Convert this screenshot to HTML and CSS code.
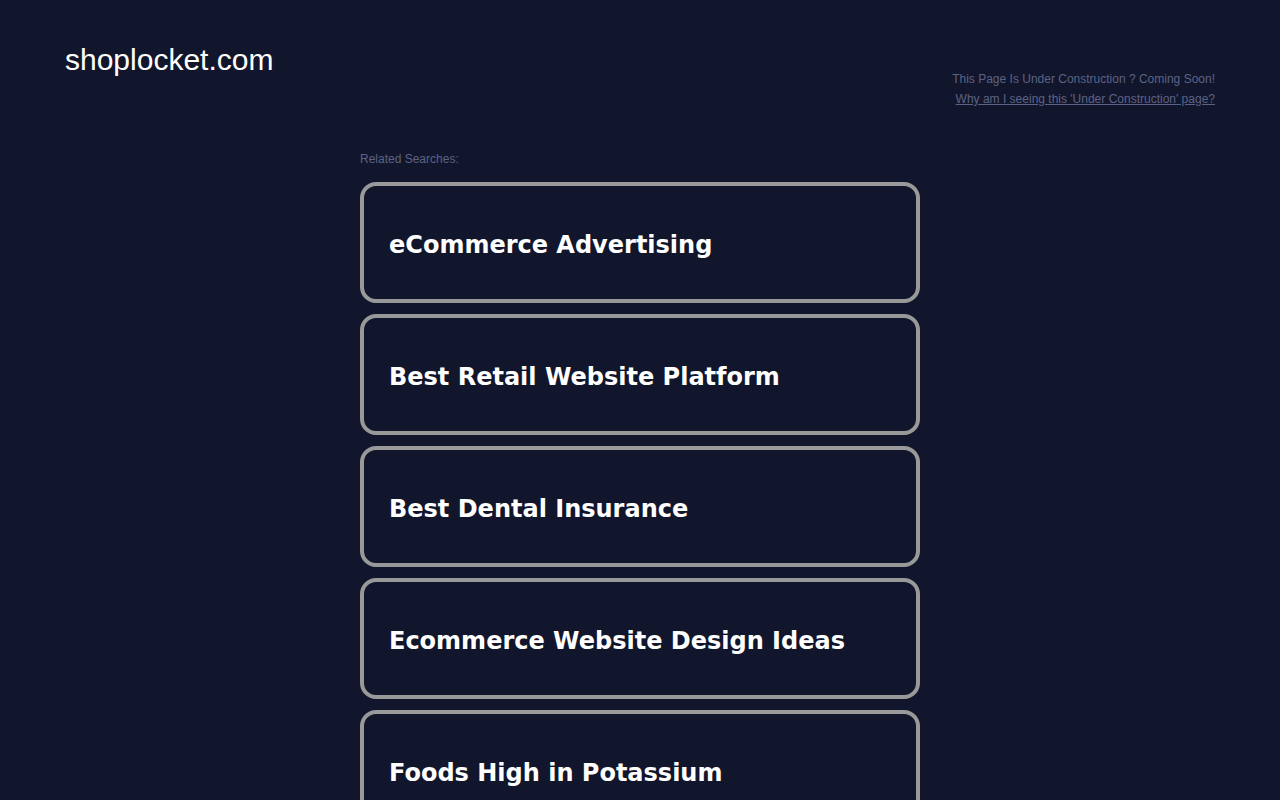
FILE: index.html
```html
<!DOCTYPE html>
<html>
<head>
<meta charset="utf-8">
<link rel="stylesheet" href="styles.css">
</head>
<body>
<div class="header">
  <div class="logo">shoplocket.com</div>
  <div class="notice">
    <div class="notice-line">This Page Is Under Construction ? Coming Soon!</div>
    <div class="notice-line"><a class="notice-link" href="#">Why am I seeing this 'Under Construction' page?</a></div>
  </div>
</div>
<div class="main">
  <div class="related">Related Searches:</div>
  <div class="list">
    <a class="item" href="#">eCommerce Advertising</a>
    <a class="item" href="#">Best Retail Website Platform</a>
    <a class="item" href="#">Best Dental Insurance</a>
    <a class="item" href="#">Ecommerce Website Design Ideas</a>
    <a class="item" href="#">Foods High in Potassium</a>
  </div>
</div>
</body>
</html>
```
FILE: styles.css
```css
html, body {
  margin: 0;
  padding: 0;
  background: #11162c;
  height: 100%;
  overflow: hidden;
}
body {
  font-family: "Liberation Sans", Arial, sans-serif;
}
.header {
  display: flex;
  justify-content: space-between;
  align-items: flex-start;
  padding: 40px 65px 0 65px;
}
.logo {
  color: #ffffff;
  font-size: 30px;
  line-height: 40px;
}
.notice {
  margin-top: 29px;
  text-align: right;
  font-size: 12px;
  line-height: 20px;
  color: #5d6285;
}
.notice-link {
  color: #5d6285;
  text-decoration: underline;
}
.main {
  width: 560px;
  margin: 0 auto;
  padding-top: 43px;
}
.related {
  font-size: 12px;
  line-height: 14px;
  color: #5d6285;
  margin-bottom: 16px;
}
.list {
  display: flex;
  flex-direction: column;
  gap: 11px;
}
.item {
  display: block;
  box-sizing: border-box;
  height: 121px;
  border: 4px solid #999999;
  border-radius: 16px;
  padding: 3px 25px 0 25px;
  line-height: 113px;
  color: #ffffff;
  text-decoration: none;
  font-family: "DejaVu Sans", Verdana, sans-serif;
  font-weight: bold;
  font-size: 24px;
  white-space: nowrap;
}
```
